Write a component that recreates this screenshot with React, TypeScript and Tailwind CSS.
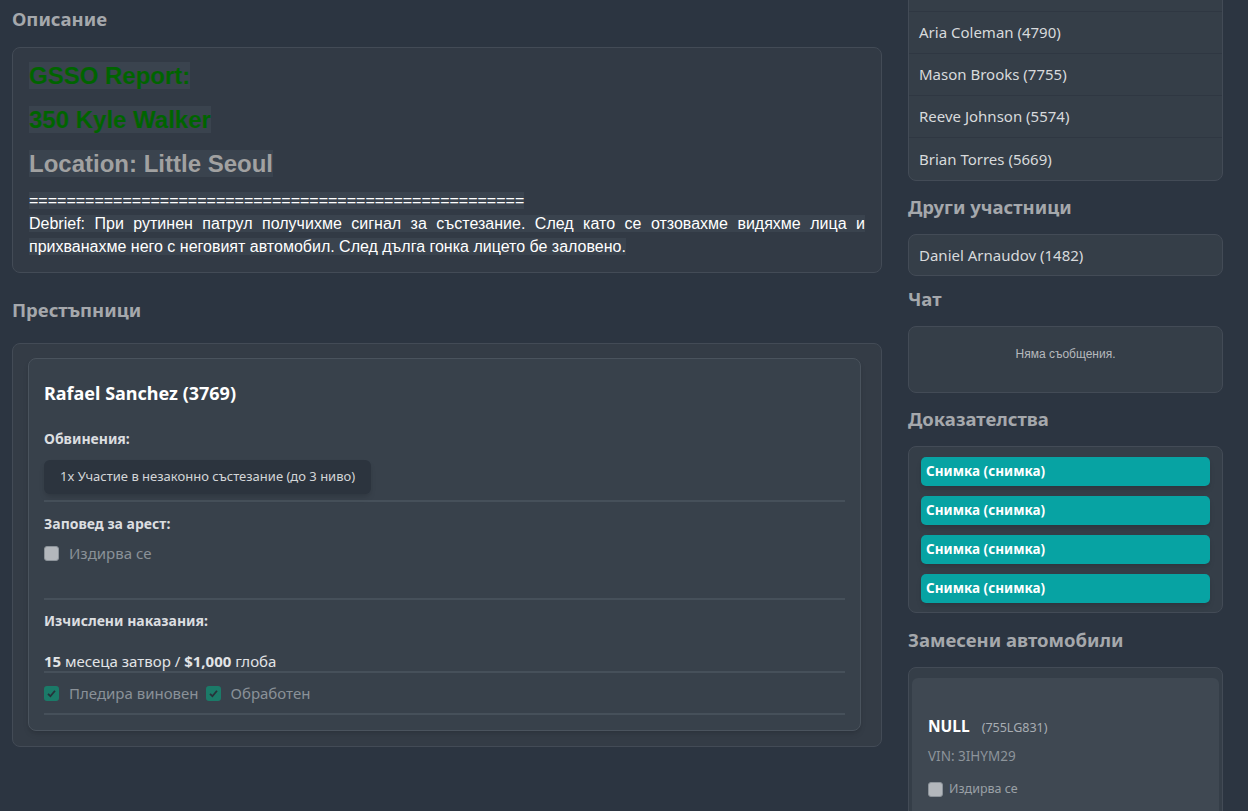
import React from "react";

const ui = "font-['Noto_Sans','Open_Sans',sans-serif]";
const arial = "font-['Liberation_Sans',Arial,sans-serif]";

const officers = [
  "Ryan Parker (3012)",
  "Aria Coleman (4790)",
  "Mason Brooks (7755)",
  "Reeve Johnson (5574)",
  "Brian Torres (5669)",
];

const Check = ({ checked }: { checked?: boolean }) =>
  checked ? (
    <span className="flex h-[15px] w-[15px] items-center justify-center rounded-[3px] bg-[#1b7a68]">
      <svg viewBox="0 0 12 12" className="h-[11px] w-[11px]">
        <path d="M2.2 6.4 L4.8 9 L9.8 3" fill="none" stroke="#27313a" strokeWidth="2" />
      </svg>
    </span>
  ) : (
    <span className="h-[15px] w-[15px] rounded-[3px] border border-[#8c939a] bg-[#b3b7bc]" />
  );

const Heading = ({ children, className = "" }: { children: React.ReactNode; className?: string }) => (
  <h3 className={`text-[18.5px] font-bold leading-6 text-[#a5a8ac] ${className}`}>{children}</h3>
);

export default function App() {
  return (
    <div className={`h-[811px] overflow-hidden bg-[#2c3541] ${ui}`}>
      <div className="flex gap-[26px] pl-3 pr-[25px]">
        {/* left column */}
        <div className="flex-1 pt-[7px]">
          <Heading>Описание</Heading>

          <div className="mt-4 rounded-lg border border-[#434b56] bg-[#323a45] px-4 pb-[14px] pt-[14px]">
            <div className={arial}>
              <div className="mb-[17px] text-[24px] font-bold leading-[27px] text-[#006400]">
                <span className="bg-[#3a434e]">GSSO Report: </span>
              </div>
              <div className="mb-[17px] text-[24px] font-bold leading-[27px] text-[#006400]">
                <span className="bg-[#3a434e]">350 Kyle Walker</span>
              </div>
              <div className="text-[24px] font-bold leading-[27px] text-[#a1a1a1]">
                <span className="bg-[#3a434e]">Location: Little Seoul</span>
              </div>
              <p className="mt-3 text-justify text-[16px] leading-[23px] text-white">
                <span className="bg-[#3a434e]">
                  =====================================================
                </span>
                <br />
                <span className="bg-[#3a434e]">
                  Debrief: При рутинен патрул получихме сигнал за състезание. След като се отзовахме видяхме лица и
                  прихванахме него с неговият автомобил. След дълга гонка лицето бе заловено.
                </span>
              </p>
            </div>
          </div>

          <Heading className="mt-[25px]">Престъпници</Heading>

          <div className="mt-[21px] rounded-lg border border-[#434b56] bg-[#343c46] pb-[15px] pl-[15px] pr-5 pt-[14px]">
            <div className="rounded-lg border border-[#4a535d] bg-[#38414b] px-[15px] pb-[15px] pt-[22px] shadow-md">
              <div className="text-[18px] font-bold leading-6 text-white">Rafael Sanchez (3769)</div>

              <div className="mt-[24px] text-[14px] font-bold leading-5 text-[#dcdee0]">Обвинения:</div>
              <div className="mt-[11px] inline-flex h-[34px] items-center rounded-md bg-[#2c343e] px-4 text-[13px] text-[#d4d6d8] shadow-md">
                1x Участие в незаконно състезание (до 3 ниво)
              </div>
              <div className="mt-[6px] h-[2px] bg-[#46505a]" />

              <div className="mt-3 text-[14px] font-bold leading-5 text-[#dcdee0]">Заповед за арест:</div>
              <label className="mt-[9px] flex h-5 items-center gap-[10px] text-[15px] text-[#8a9198]">
                <Check />
                Издирва се
              </label>
              <div className="mt-[35px] h-[2px] bg-[#46505a]" />

              <div className="mt-[11px] text-[14px] font-bold leading-5 text-[#dcdee0]">Изчислени наказания:</div>
              <div className="mt-[20px] text-[15px] leading-5 text-[#e2e4e6]">
                <b>15</b> месеца затвор / <b>$1,000</b> глоба
              </div>
              <div className="h-[2px] bg-[#46505a]" />

              <div className="mt-[10px] flex h-5 items-center text-[15px] text-[#8a9198]">
                <Check checked />
                <span className="ml-[10px]">Пледира виновен</span>
                <span className="ml-[7px]">
                  <Check checked />
                </span>
                <span className="ml-[10px]">Обработен</span>
              </div>
              <div className="mt-[10px] h-[2px] bg-[#46505a]" />
            </div>
          </div>
        </div>

        {/* right column */}
        <div className="-mt-[31px] w-[315px] shrink-0">
          <div className="rounded-lg border border-[#434b56] bg-[#353e48]">
            {officers.map((o, i) => (
              <div
                key={o}
                className={`flex h-[42px] items-center px-[10px] text-[15px] text-[#d8dadc] ${
                  i < officers.length - 1 ? "border-b border-[#2f3742]" : "h-[41px]"
                }`}
              >
                {o}
              </div>
            ))}
          </div>

          <Heading className="mt-[14px]">Други участници</Heading>
          <div className="mt-[15px] flex h-[42px] items-center rounded-lg border border-[#434b56] bg-[#353e48] px-[10px] text-[15px] text-[#d8dadc]">
            Daniel Arnaudov (1482)
          </div>

          <Heading className="mt-[11px]">Чат</Heading>
          <div
            className={`mt-[15px] rounded-lg border border-[#434b56] bg-[#353e48] pb-[30px] pt-[19px] text-center text-[12px] leading-4 text-[#b5b9bd] ${arial}`}
          >
            Няма съобщения.
          </div>

          <Heading className="mt-[14px]">Доказателства</Heading>
          <div className="mt-[15px] flex flex-col gap-[10px] rounded-lg border border-[#434b56] bg-[#353e48] px-3 pb-[9px] pt-[10px]">
            {[0, 1, 2, 3].map((i) => (
              <div
                key={i}
                className="flex h-[29px] items-center rounded-[5px] bg-[#07a3a3] pl-[5px] text-[13.5px] font-bold text-white shadow-md"
              >
                Снимка (снимка)
              </div>
            ))}
          </div>

          <Heading className="mt-[15px]">Замесени автомобили</Heading>
          <div className="mt-[15px] rounded-lg border border-[#434b56] bg-[#353e48] px-[3px] pt-[10px] pb-3">
            <div className="rounded-md bg-[#3f4852] px-4 pb-6 pt-[38px]">
              <div className="flex items-baseline gap-[12px] leading-5">
                <span className="text-[15.5px] font-bold text-white">NULL</span>
                <span className="text-[12.5px] text-[#a8adb2]">(755LG831)</span>
              </div>
              <div className="mt-2 text-[13.5px] leading-5 text-[#8d949b]">VIN: 3IHYM29</div>
              <label className="mt-[14px] flex items-center gap-[6px] text-[12.5px] text-[#9aa0a6]">
                <Check />
                Издирва се
              </label>
            </div>
          </div>
        </div>
      </div>
    </div>
  );
}
